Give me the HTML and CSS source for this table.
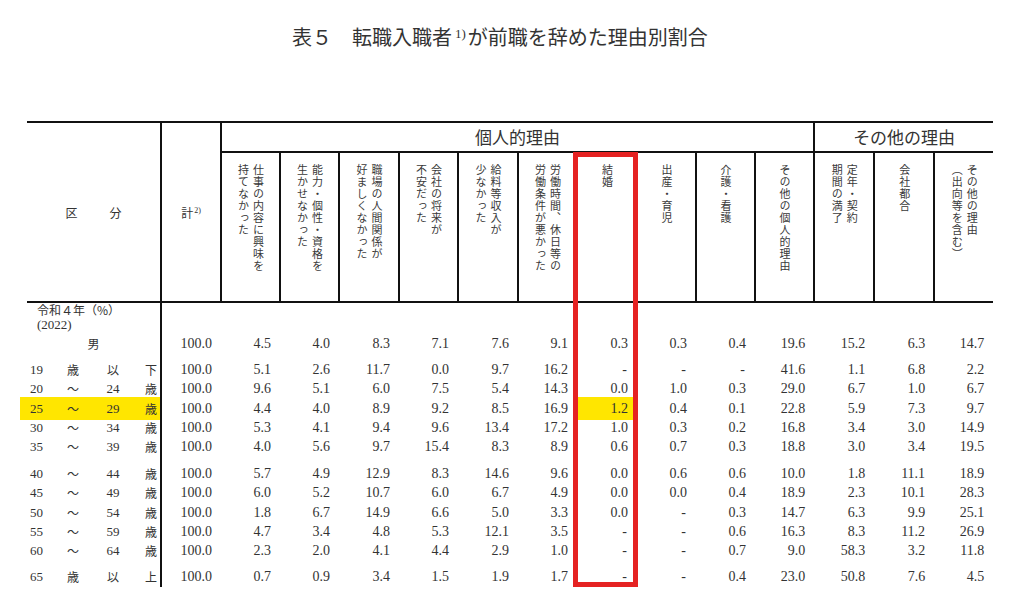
FILE: index.html
```html
<!DOCTYPE html>
<html lang="ja">
<head>
<meta charset="utf-8">
<title>表5 転職入職者が前職を辞めた理由別割合</title>
<link rel="stylesheet" href="styles.css">
</head>
<body>
<div class="page">
  <h1 class="title">表５　転職入職者<span class="note">1)</span>が前職を辞めた理由別割合</h1>
  <div class="sheet">
    <table class="stats">
      <colgroup>
        <col class="c-kubun"><col class="c-60">
        <col class="c-59"><col class="c-59"><col class="c-60"><col class="c-59"><col class="c-60"><col class="c-59"><col class="c-60"><col class="c-59"><col class="c-59"><col class="c-59"><col class="c-60"><col class="c-60"><col class="c-59">
      </colgroup>
      <thead>
        <tr class="grp">
          <th class="kubun" rowspan="2"><span class="kb">区</span><span class="kb">分</span></th>
          <th class="kei" rowspan="2">計<span class="sup">2)</span></th>
          <th class="grp-h sep" colspan="10">個人的理由</th>
          <th class="grp-h" colspan="3">その他の理由</th>
        </tr>
        <tr class="sub">
          <th class="sep"><span class="vt">仕事の内容に興味を<br>持てなかった</span></th>
          <th class="sep"><span class="vt">能力・個性・資格を<br>生かせなかった</span></th>
          <th class="sep"><span class="vt">職場の人間関係が<br>好ましくなかった</span></th>
          <th class="sep"><span class="vt">会社の将来が<br>不安だった</span></th>
          <th class="sep"><span class="vt">給料等収入が<br>少なかった</span></th>
          <th class="sep"><span class="vt">労働時間、休日等の<br>労働条件が悪かった</span></th>
          <th class="sep"><span class="vt">結婚</span></th>
          <th class="sep"><span class="vt">出産・育児</span></th>
          <th class="sep"><span class="vt">介護・看護</span></th>
          <th class="sep"><span class="vt">その他の個人的理由</span></th>
          <th class="sep"><span class="vt">定年・契約<br>期間の満了</span></th>
          <th class="sep"><span class="vt">会社都合</span></th>
          <th><span class="vt">その他の理由<br>（出向等を含む）</span></th>
        </tr>
      </thead>
      <tbody>
        <tr class="r-era">
          <td class="lab"><span class="era">令和４年（%）</span></td>
          <td></td><td></td><td></td><td></td><td></td><td></td><td></td><td></td><td></td><td></td><td></td><td></td><td></td><td></td>
        </tr>
        <tr class="r-year">
          <td class="lab"><span class="year">(2022)</span></td>
          <td></td><td></td><td></td><td></td><td></td><td></td><td></td><td></td><td></td><td></td><td></td><td></td><td></td><td></td>
        </tr>
        <tr class="r-total">
          <td class="lab center"><span class="jp">男</span></td>
          <td>100.0</td><td>4.5</td><td>4.0</td><td>8.3</td><td>7.1</td><td>7.6</td><td>9.1</td><td>0.3</td><td>0.3</td><td>0.4</td><td>19.6</td><td>15.2</td><td>6.3</td><td>14.7</td>
        </tr>
        <tr class="r gap-s">
          <td class="lab"><div class="age"><span>19</span><span class="jp">歳</span><span class="jp">以</span><span class="jp">下</span></div></td>
          <td>100.0</td><td>5.1</td><td>2.6</td><td>11.7</td><td>0.0</td><td>9.7</td><td>16.2</td><td class="na">-</td><td class="na">-</td><td class="na">-</td><td>41.6</td><td>1.1</td><td>6.8</td><td>2.2</td>
        </tr>
        <tr class="r">
          <td class="lab"><div class="age"><span>20</span><span class="jp">～</span><span>24</span><span class="jp">歳</span></div></td>
          <td>100.0</td><td>9.6</td><td>5.1</td><td>6.0</td><td>7.5</td><td>5.4</td><td>14.3</td><td>0.0</td><td>1.0</td><td>0.3</td><td>29.0</td><td>6.7</td><td>1.0</td><td>6.7</td>
        </tr>
        <tr class="r">
          <td class="lab hl hl-left"><div class="age"><span>25</span><span class="jp">～</span><span>29</span><span class="jp">歳</span></div></td>
          <td>100.0</td><td>4.4</td><td>4.0</td><td>8.9</td><td>9.2</td><td>8.5</td><td>16.9</td><td class="hl">1.2</td><td>0.4</td><td>0.1</td><td>22.8</td><td>5.9</td><td>7.3</td><td>9.7</td>
        </tr>
        <tr class="r">
          <td class="lab"><div class="age"><span>30</span><span class="jp">～</span><span>34</span><span class="jp">歳</span></div></td>
          <td>100.0</td><td>5.3</td><td>4.1</td><td>9.4</td><td>9.6</td><td>13.4</td><td>17.2</td><td>1.0</td><td>0.3</td><td>0.2</td><td>16.8</td><td>3.4</td><td>3.0</td><td>14.9</td>
        </tr>
        <tr class="r">
          <td class="lab"><div class="age"><span>35</span><span class="jp">～</span><span>39</span><span class="jp">歳</span></div></td>
          <td>100.0</td><td>4.0</td><td>5.6</td><td>9.7</td><td>15.4</td><td>8.3</td><td>8.9</td><td>0.6</td><td>0.7</td><td>0.3</td><td>18.8</td><td>3.0</td><td>3.4</td><td>19.5</td>
        </tr>
        <tr class="r gap-l">
          <td class="lab"><div class="age"><span>40</span><span class="jp">～</span><span>44</span><span class="jp">歳</span></div></td>
          <td>100.0</td><td>5.7</td><td>4.9</td><td>12.9</td><td>8.3</td><td>14.6</td><td>9.6</td><td>0.0</td><td>0.6</td><td>0.6</td><td>10.0</td><td>1.8</td><td>11.1</td><td>18.9</td>
        </tr>
        <tr class="r">
          <td class="lab"><div class="age"><span>45</span><span class="jp">～</span><span>49</span><span class="jp">歳</span></div></td>
          <td>100.0</td><td>6.0</td><td>5.2</td><td>10.7</td><td>6.0</td><td>6.7</td><td>4.9</td><td>0.0</td><td>0.0</td><td>0.4</td><td>18.9</td><td>2.3</td><td>10.1</td><td>28.3</td>
        </tr>
        <tr class="r">
          <td class="lab"><div class="age"><span>50</span><span class="jp">～</span><span>54</span><span class="jp">歳</span></div></td>
          <td>100.0</td><td>1.8</td><td>6.7</td><td>14.9</td><td>6.6</td><td>5.0</td><td>3.3</td><td>0.0</td><td class="na">-</td><td>0.3</td><td>14.7</td><td>6.3</td><td>9.9</td><td>25.1</td>
        </tr>
        <tr class="r">
          <td class="lab"><div class="age"><span>55</span><span class="jp">～</span><span>59</span><span class="jp">歳</span></div></td>
          <td>100.0</td><td>4.7</td><td>3.4</td><td>4.8</td><td>5.3</td><td>12.1</td><td>3.5</td><td class="na">-</td><td class="na">-</td><td>0.6</td><td>16.3</td><td>8.3</td><td>11.2</td><td>26.9</td>
        </tr>
        <tr class="r">
          <td class="lab"><div class="age"><span>60</span><span class="jp">～</span><span>64</span><span class="jp">歳</span></div></td>
          <td>100.0</td><td>2.3</td><td>2.0</td><td>4.1</td><td>4.4</td><td>2.9</td><td>1.0</td><td class="na">-</td><td class="na">-</td><td>0.7</td><td>9.0</td><td>58.3</td><td>3.2</td><td>11.8</td>
        </tr>
        <tr class="r gap-m">
          <td class="lab"><div class="age"><span>65</span><span class="jp">歳</span><span class="jp">以</span><span class="jp">上</span></div></td>
          <td>100.0</td><td>0.7</td><td>0.9</td><td>3.4</td><td>1.5</td><td>1.9</td><td>1.7</td><td class="na">-</td><td class="na">-</td><td>0.4</td><td>23.0</td><td>50.8</td><td>7.6</td><td>4.5</td>
        </tr>
      </tbody>
    </table>
    <div class="mark" aria-hidden="true"></div>
  </div>
</div>
</body>
</html>
```

FILE: styles.css
```css
* { box-sizing: border-box; }

html, body {
  margin: 0;
  background: #fff;
}

body {
  color: #333;
  font-family: "Liberation Serif", "Noto Sans CJK JP", serif;
  overflow: hidden;
}

.page {
  padding-top: 25px;
}

.title {
  margin: 0 0 0 292px;
  font: 400 20px/24px "Noto Sans CJK JP", sans-serif;
  color: #333;
  white-space: nowrap;
  letter-spacing: 0;
}

.title .note {
  font-family: "Liberation Serif", serif;
  font-size: 13px;
  vertical-align: 7px;
  line-height: 0;
  padding: 0 2px 0 3px;
}

.sheet {
  position: relative;
  margin: 72px 0 0 27px;
  width: 966px;
}

.stats {
  border-collapse: collapse;
  table-layout: fixed;
  width: 966px;
}

.c-kubun { width: 134px; }
.c-60 { width: 60px; }
.c-59 { width: 59px; }

.stats th {
  padding: 0;
  font-weight: 400;
  border: 0 solid #111;
  border-bottom-width: 2px;
  font-family: "Noto Sans CJK JP", sans-serif;
  color: #333;
}

.grp th {
  height: 30px;
  border-top-width: 2px;
}

.grp-h {
  font-size: 17px;
  line-height: 20px;
  letter-spacing: 0;
}

.sub th {
  height: 150px;
  vertical-align: top;
  padding-top: 11px;
  text-align: center;
}

.stats th.sep,
.stats th.kubun,
.stats th.kei {
  border-right-width: 2px;
}

.kubun {
  font-size: 12px;
  text-align: center;
}

.kb {
  display: inline-block;
  margin: 0 16px;
}

.kei {
  font-size: 12px;
}

.sup {
  font-family: "Liberation Serif", serif;
  font-size: 8px;
  vertical-align: 5px;
  line-height: 0;
  margin-left: 1px;
}

.vt {
  display: inline-block;
  writing-mode: vertical-rl;
  font-size: 11px;
  line-height: 15px;
  letter-spacing: 1px;
  text-align: start;
  color: #3a3a3a;
}

.stats td {
  padding: 0 9px 0 0;
  text-align: right;
  font-size: 14px;
  line-height: 16px;
  vertical-align: middle;
  white-space: nowrap;
  color: #333;
}

.stats td.lab {
  border-right: 2px solid #111;
  text-align: left;
  padding: 0 3px;
  font-size: 13px;
}

.stats td.center {
  text-align: center;
}

.jp {
  font-family: "Noto Sans CJK JP", sans-serif;
  font-size: 12px;
}

.era {
  font-family: "Noto Sans CJK JP", sans-serif;
  font-size: 12px;
  padding-left: 7px;
  line-height: 14px;
}

.year {
  padding-left: 7px;
  line-height: 13px;
}

.r-era td { height: 14px; line-height: 14px; }
.r-year td { height: 13px; line-height: 13px; }
.r-total td { height: 26px; }

.r td { height: 19.3px; }
.r.gap-s td { height: 22.8px; padding-top: 3.5px; }
.r.gap-l td { height: 26.8px; padding-top: 7.5px; }
.r.gap-m td { height: 25.8px; padding-top: 6.5px; }

.age {
  display: grid;
  grid-template-columns: 26px 34px 46px 1fr;
  align-items: center;
}

.age > span:nth-child(2),
.age > span:nth-child(3) { text-align: center; }
.age > span:nth-child(4) { text-align: right; }

.stats td.na {
  padding-right: 10px;
}

.stats td.hl {
  background: #ffe600;
  box-shadow: 0 -2px 0 #ffe600, 0 2px 0 #ffe600;
}

.stats td.hl-left {
  box-shadow: 0 -2px 0 #ffe600, 0 2px 0 #ffe600, -7px 0 0 #ffe600, -7px -2px 0 #ffe600, -7px 2px 0 #ffe600;
}

.mark {
  position: absolute;
  left: 546px;
  top: 31px;
  width: 65px;
  height: 435px;
  border: 5px solid #e52222;
  pointer-events: none;
}
```
